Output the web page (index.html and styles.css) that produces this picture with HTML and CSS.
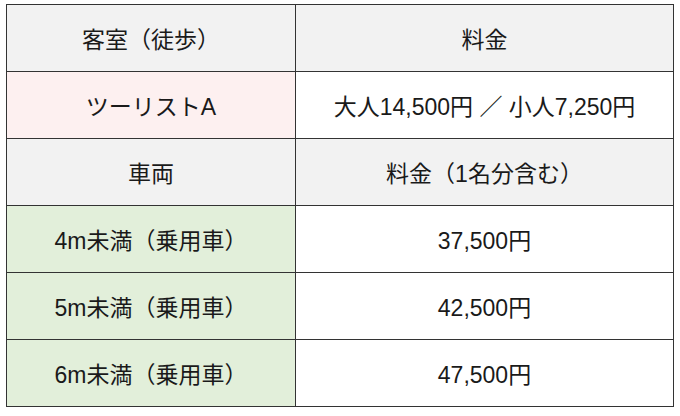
FILE: index.html
```html
<!DOCTYPE html>
<html lang="ja">
<head>
<meta charset="utf-8">
<link rel="stylesheet" href="styles.css">
</head>
<body>
<table class="fare">
  <colgroup><col class="c1"><col class="c2"></colgroup>
  <tr class="head"><td>客室（徒歩）</td><td>料金</td></tr>
  <tr><td class="pink">ツーリストA</td><td>大人14,500円 ／ 小人7,250円</td></tr>
  <tr class="head"><td>車両</td><td>料金（1名分含む）</td></tr>
  <tr><td class="green">4m未満（乗用車）</td><td>37,500円</td></tr>
  <tr><td class="green">5m未満（乗用車）</td><td>42,500円</td></tr>
  <tr><td class="green">6m未満（乗用車）</td><td>47,500円</td></tr>
</table>
</body>
</html>
```
FILE: styles.css
```css
html, body { margin: 0; padding: 0; background: #ffffff; }
body { padding: 4px 0 0 6px; }
.fare {
  border-collapse: collapse;
  width: 667px;
  table-layout: fixed;
  font-family: "Liberation Sans", "Noto Sans CJK JP", sans-serif;
  font-size: 23px;
  color: #1a1a1a;
}
.c1 { width: 289px; }
.c2 { width: 378px; }
.fare td {
  border: 1px solid #333333;
  height: 66px;
  padding: 0;
  text-align: center;
  vertical-align: middle;
  background: #ffffff;
}
.fare tr.head td { background: #f2f2f2; }
.fare td.pink { background: #fdf0f0; }
.fare td.green { background: #e2efda; }
```
